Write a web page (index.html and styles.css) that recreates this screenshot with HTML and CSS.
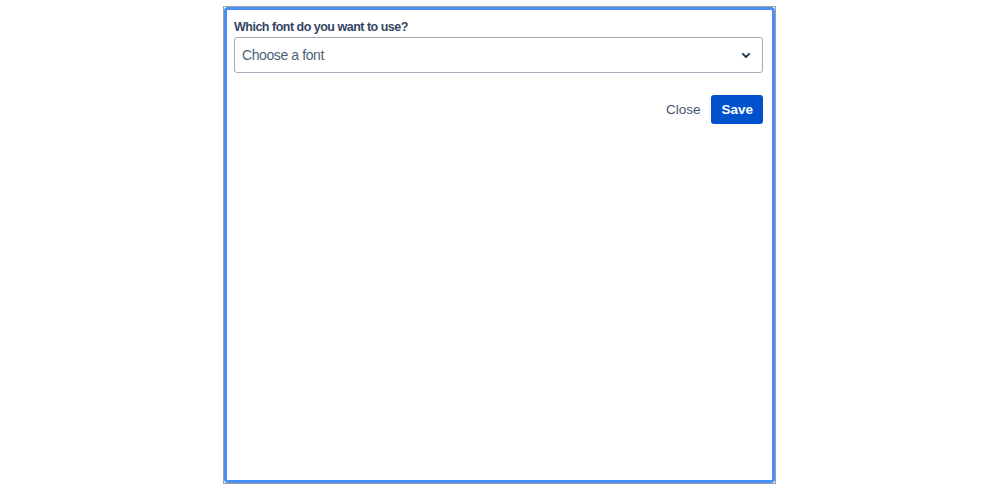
FILE: index.html
```html
<!DOCTYPE html>
<html lang="en">
<head>
  <meta charset="UTF-8">
  <title>Font picker</title>
  <link rel="stylesheet" href="styles.css">
</head>
<body>
<div class="frame">
  <div class="panel">
    <label class="label" for="font">Which font do you want to use?</label>
    <div class="select" id="font">
      <span class="placeholder">Choose a font</span>
      <svg class="chevron" width="24" height="24" viewBox="0 0 24 24">
        <path d="M8.8 10.8L12 14l3.2-3.2" fill="none" stroke="currentColor" stroke-width="1.8" stroke-linecap="round" stroke-linejoin="round"/>
      </svg>
    </div>
    <div class="actions">
      <button class="btn btn-subtle">Close</button>
      <button class="btn btn-primary">Save</button>
    </div>
  </div>
</div>
</body>
</html>
```

FILE: styles.css
```css
* {
  margin: 0;
  padding: 0;
  box-sizing: border-box;
}

body {
  background: #fff;
  font-family: "Liberation Sans", Arial, sans-serif;
  display: flex;
  justify-content: center;
  padding-top: 6px;
}

.frame {
  width: 553px;
  height: 478px;
  border: 1px solid #9aa0a8;
}

.panel {
  height: 100%;
  border: 3px solid #4a8ff3;
  border-radius: 4px;
  padding: 9px 9px 0 7px;
}

.label {
  display: block;
  font-size: 12.5px;
  font-weight: bold;
  letter-spacing: -0.5px;
  line-height: 16px;
  color: #344563;
  margin-bottom: 2px;
}

.select {
  height: 36px;
  border: 1px solid #a5adba;
  border-radius: 3px;
  display: flex;
  align-items: center;
  justify-content: space-between;
  padding: 0 4px 0 7px;
}

.placeholder {
  font-size: 14px;
  letter-spacing: -0.4px;
  color: #505f79;
}

.chevron {
  color: #253858;
}

.actions {
  display: flex;
  justify-content: flex-end;
  gap: 1px;
  margin-top: 22px;
}

.btn {
  font-family: inherit;
  font-size: 13.5px;
  height: 29px;
  padding: 0 10px;
  border: 0;
  border-radius: 3px;
  background: none;
  cursor: pointer;
}

.btn-subtle {
  color: #42526e;
}

.btn-primary {
  background: #0052cc;
  color: #fff;
  font-weight: bold;
}
```
